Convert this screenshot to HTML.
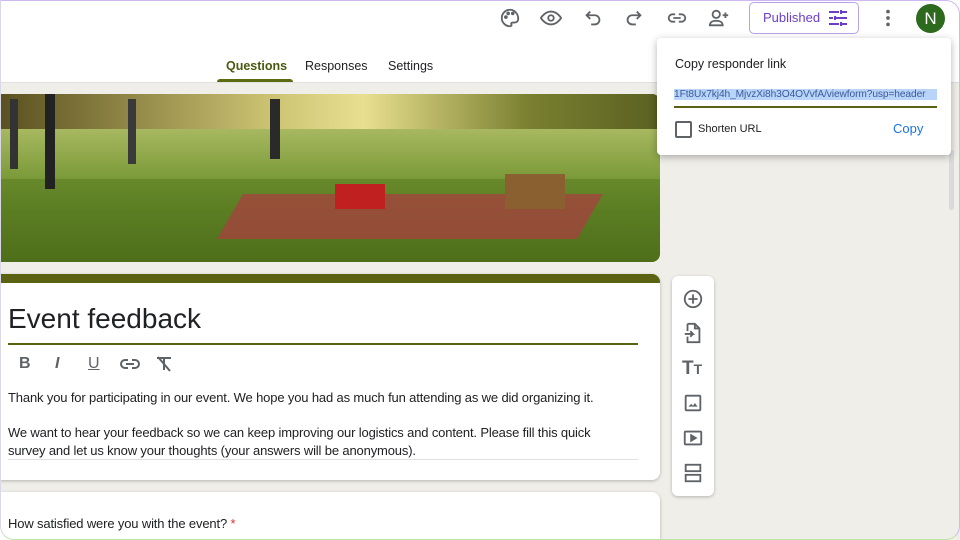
<!DOCTYPE html>
<html><head><style>
*{margin:0;padding:0;box-sizing:border-box}
html,body{width:960px;height:540px;overflow:hidden}
body{font-family:"Liberation Sans",sans-serif;background:#efeee8;position:relative;color:#202124}
.hdr{position:absolute;left:0;top:0;width:960px;height:83px;background:#fff;border-bottom:1px solid #e0e0e0}
.frame{position:absolute;left:0;top:0;width:960px;height:540px;border:1px solid #cdb8f0;border-bottom-color:#b8e6a8;border-left-color:#d8d8e8;border-radius:0 14px 14px 14px;pointer-events:none;z-index:20}
.ic{position:absolute;top:7px;width:22px;height:22px}
.pub{position:absolute;left:749px;top:2px;width:110px;height:32px;border:1px solid #b9a3e8;border-radius:5px;color:#6a3fc8;font-size:13px;line-height:30px;padding-left:13px}
.av{position:absolute;left:916px;top:4px;width:29px;height:29px;border-radius:50%;background:#2d6a1e;color:#fff;font-size:17px;text-align:center;line-height:29px}
.tabs{position:absolute;top:59px;font-size:12.5px}
.tabs span{position:absolute;white-space:nowrap}
.img{position:absolute;left:0;top:94px;width:660px;height:168px;border-radius:0 8px 8px 0;overflow:hidden;background:linear-gradient(180deg,#4e6a2a 0%,#9bb25a 20%,#6f8f30 40%,#5b7d22 70%,#4e6e1a 100%)}
.card{position:absolute;left:0;width:660px;background:#fff;border-radius:0 8px 8px 0;box-shadow:0 1px 3px rgba(0,0,0,.25)}
.side{position:absolute;left:672px;top:276px;width:42px;height:220px;background:#fff;border-radius:6px;box-shadow:0 1px 3px rgba(0,0,0,.25)}
.pop{position:absolute;left:657px;top:38px;width:294px;height:117px;background:#fff;border-radius:4px;box-shadow:0 2px 8px rgba(0,0,0,.3);z-index:10}
p{font-size:13px;line-height:18px;letter-spacing:-0.15px}
</style></head><body>
<div class="hdr">
<svg class="ic" style="left:499px" viewBox="0 0 24 24" fill="none" stroke="#5f6368" stroke-width="2"><path d="M12 3a9 9 0 0 0 0 18c1.5 0 2-1 1.5-2s0-2 1.5-2h2a4 4 0 0 0 4-4c0-5.5-4-10-9-10z"/><circle cx="7.5" cy="11" r="1" fill="#5f6368"/><circle cx="10" cy="7" r="1" fill="#5f6368"/><circle cx="15" cy="7" r="1" fill="#5f6368"/></svg>
<svg class="ic" style="left:540px" viewBox="0 0 24 24" fill="none" stroke="#5f6368" stroke-width="2"><path d="M1 12s4-7 11-7 11 7 11 7-4 7-11 7S1 12 1 12z"/><circle cx="12" cy="12" r="3"/></svg>
<svg class="ic" style="left:582px" viewBox="0 0 24 24" fill="none" stroke="#5f6368" stroke-width="2"><path d="M9 5 5 9l4 4M5 9h9a5 5 0 0 1 0 10h-4"/></svg>
<svg class="ic" style="left:623px" viewBox="0 0 24 24" fill="none" stroke="#5f6368" stroke-width="2"><path d="M15 5l4 4-4 4M19 9h-9a5 5 0 0 0 0 10h4"/></svg>
<svg class="ic" style="left:666px" viewBox="0 0 24 24" fill="none" stroke="#5f6368" stroke-width="2"><path d="M10 8H7a4 4 0 0 0 0 8h3M14 8h3a4 4 0 0 1 0 8h-3M8 12h8"/></svg>
<svg class="ic" style="left:708px" viewBox="0 0 24 24" fill="none" stroke="#5f6368" stroke-width="2"><circle cx="9" cy="8" r="4"/><path d="M2 20c0-4 4-5 7-5s7 1 7 5zM19 6v6M16 9h6"/></svg>
<div class="pub">Published<svg style="position:absolute;left:79px;top:7px" width="18" height="16" viewBox="0 0 18 16" stroke="#6a3fc8" stroke-width="2"><path d="M0 2h10M13 2h5M12 0v4M0 8h4M7 8h11M6 6v4M0 14h10M13 14h5M12 12v4"/></svg></div>
<svg class="ic" style="left:877px" viewBox="0 0 24 24" fill="#5f6368"><circle cx="12" cy="5" r="2"/><circle cx="12" cy="12" r="2"/><circle cx="12" cy="19" r="2"/></svg>
<div class="av">N</div>
<div class="tabs"><span style="left:226px;color:#4a5a0e;font-weight:bold">Questions</span><span style="left:305px">Responses</span><span style="left:388px">Settings</span></div>
<div style="position:absolute;left:217px;top:79px;width:76px;height:3px;background:#5b6b12;border-radius:3px 3px 0 0"></div>
</div>
<div class="img">
<div style="position:absolute;left:0;top:0;width:660px;height:35px;background:linear-gradient(90deg,#5a5020,#c9c070 40%,#e8e090 55%,#7a8030 80%,#5a6020)"></div>
<div style="position:absolute;left:0;top:35px;width:660px;height:50px;background:linear-gradient(180deg,#a8b860,#7a9a38)"></div>
<div style="position:absolute;left:10px;top:5px;width:8px;height:70px;background:#333"></div>
<div style="position:absolute;left:45px;top:0;width:10px;height:95px;background:#222"></div>
<div style="position:absolute;left:128px;top:5px;width:8px;height:65px;background:#3a3a3a"></div>
<div style="position:absolute;left:270px;top:5px;width:10px;height:60px;background:#2a2a2a"></div>
<div style="position:absolute;left:230px;top:100px;width:360px;height:45px;background:#a84040;transform:skewX(-30deg);opacity:.75"></div>
<div style="position:absolute;left:335px;top:90px;width:50px;height:25px;background:#c02020"></div>
<div style="position:absolute;left:505px;top:80px;width:60px;height:35px;background:#8a6030"></div>
</div>
<div class="card" style="top:274px;height:206px;border-top:9px solid #5b6212">
<div style="position:absolute;left:8px;top:20px;font-size:28px">Event feedback</div>
<div style="position:absolute;left:8px;top:60px;width:630px;height:2px;background:#5b6212"></div>
<div style="position:absolute;left:19px;top:72px;font-size:16px;color:#5f6368;font-weight:bold">B</div>
<div style="position:absolute;left:55px;top:72px;font-size:16px;color:#5f6368;font-style:italic;font-weight:bold">I</div>
<div style="position:absolute;left:88px;top:72px;font-size:16px;color:#5f6368;text-decoration:underline">U</div>
<svg style="position:absolute;left:120px;top:74px" width="20" height="14" viewBox="0 0 20 14" fill="none" stroke="#5f6368" stroke-width="2"><path d="M8 3H5a4 4 0 0 0 0 8h3M12 3h3a4 4 0 0 1 0 8h-3M6 7h8"/></svg>
<svg style="position:absolute;left:156px;top:73px" width="16" height="16" viewBox="0 0 16 16" fill="none" stroke="#5f6368" stroke-width="2"><path d="M1 2h14M8 2v12M2 1l12 14"/></svg>
<p style="position:absolute;left:8px;top:106px">Thank you for participating in our event. We hope you had as much fun attending as we did organizing it.</p>
<p style="position:absolute;left:8px;top:141px;width:620px">We want to hear your feedback so we can keep improving our logistics and content. Please fill this quick survey and let us know your thoughts (your answers will be anonymous).</p>
<div style="position:absolute;left:8px;top:176px;width:630px;height:1px;background:#e0e0e0"></div>
</div>
<div class="card" style="top:492px;height:48px;border-radius:0 8px 0 0">
<p style="position:absolute;left:8px;top:23px">How satisfied were you with the event? <span style="color:#d93025">*</span></p>
</div>
<div class="side">
<svg style="position:absolute;left:10px;top:12px" width="22" height="22" viewBox="0 0 24 24" fill="none" stroke="#5f6368" stroke-width="2"><circle cx="12" cy="12" r="9"/><path d="M12 7v10M7 12h10"/></svg>
<svg style="position:absolute;left:10px;top:46px" width="22" height="22" viewBox="0 0 24 24" fill="none" stroke="#5f6368" stroke-width="2"><path d="M6 2h8l5 5v15H6v-6M6 10V2M14 2v5h5M3 13h9l-3-3M12 13l-3 3"/></svg>
<div style="position:absolute;left:10px;top:82px;font-size:19px;font-weight:bold;color:#5f6368">T<span style="font-size:14px">T</span></div>
<svg style="position:absolute;left:10px;top:116px" width="22" height="22" viewBox="0 0 24 24" fill="none" stroke="#5f6368" stroke-width="2"><rect x="4" y="4" width="16" height="16" rx="1"/><path d="M7 16l3-3 2 2 2-3 3 4z" fill="#5f6368" stroke="none"/></svg>
<svg style="position:absolute;left:10px;top:151px" width="22" height="22" viewBox="0 0 24 24" fill="none" stroke="#5f6368" stroke-width="2"><rect x="3" y="5" width="18" height="14" rx="1"/><path d="M10 9v6l5-3z" fill="#5f6368"/></svg>
<svg style="position:absolute;left:10px;top:186px" width="22" height="22" viewBox="0 0 24 24" fill="none" stroke="#5f6368" stroke-width="2"><rect x="4" y="3" width="16" height="7"/><rect x="4" y="14" width="16" height="7"/></svg>
</div>
<div style="position:absolute;left:949px;top:150px;width:5px;height:60px;background:#dadada;border-radius:3px"></div>
<div class="pop">
<div style="position:absolute;left:18px;top:19px;font-size:12.5px">Copy responder link</div>
<div style="position:absolute;left:17px;top:51px;font-size:10.2px;letter-spacing:-0.1px;color:#3c5a9a;background:#b8d4f8;white-space:nowrap;width:263px;overflow:hidden">1Ft8Ux7kj4h_MjvzXi8h3O4OVvfA/viewform?usp=header</div>
<div style="position:absolute;left:17px;top:68px;width:263px;height:2px;background:#5b6212"></div>
<div style="position:absolute;left:18px;top:83px;width:17px;height:17px;border:2px solid #5f6368;border-radius:2px"></div>
<div style="position:absolute;left:41px;top:85px;font-size:11px">Shorten URL</div>
<div style="position:absolute;left:236px;top:83px;font-size:13px;color:#1a73e8">Copy</div>
</div>
<div class="frame"></div>
</body></html>
